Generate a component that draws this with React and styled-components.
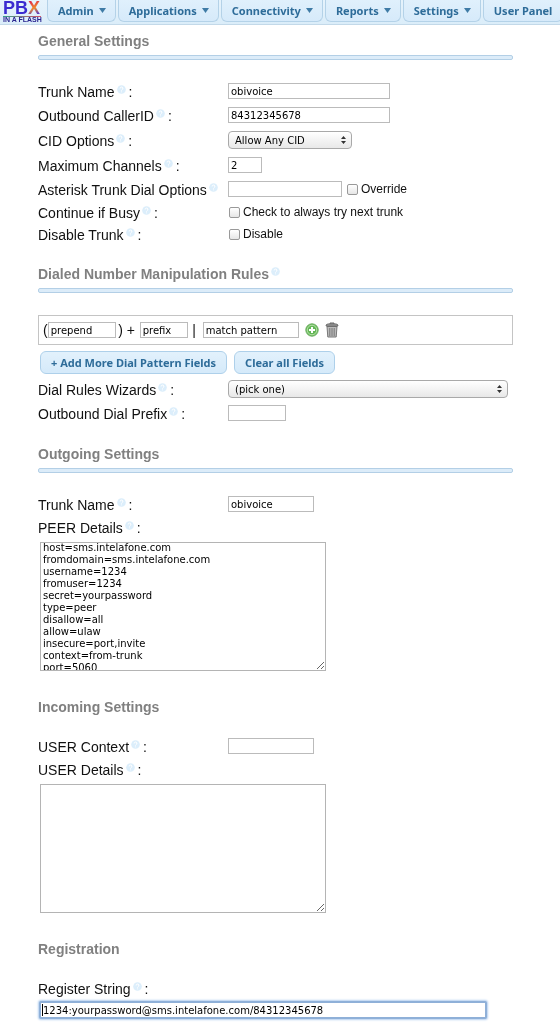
import { useEffect, useRef } from 'react';
import styled, { createGlobalStyle } from 'styled-components';

const menu = [
  { name: 'Admin', more: true },
  { name: 'Applications', more: true },
  { name: 'Connectivity', more: true },
  { name: 'Reports', more: true },
  { name: 'Settings', more: true },
  { name: 'User Panel', more: false },
];

const peerDetails = `host=sms.intelafone.com
fromdomain=sms.intelafone.com
username=1234
fromuser=1234
secret=yourpassword
type=peer
disallow=all
allow=ulaw
insecure=port,invite
context=from-trunk
port=5060

`;

function Help() {
  return (
    <HelpIcon viewBox="0 0 9 9" aria-hidden="true">
      <circle cx="4.5" cy="4.5" r="4.3" fill="#dceefb" />
      <path
        d="M3.1 3.5a1.4 1.4 0 1 1 2 1.2q-.6.3-.6.9M4.5 6.5v.8"
        fill="none"
        stroke="#fff"
      />
    </HelpIcon>
  );
}

function Field({ id, label, size, noColon, children }) {
  return (
    <Row $size={size}>
      <Label htmlFor={id}>
        {label}
        <Help />
        {!noColon && <Colon>:</Colon>}
      </Label>
      {children}
    </Row>
  );
}

function Picker({ id, option, wide }) {
  return (
    <SelectWrapper $wide={wide}>
      <Select id={id}>
        <option>{option}</option>
      </Select>
      <SelectArrows viewBox="0 0 5 8" aria-hidden="true">
        <path d="M2.5 0 5 3H0zM2.5 8 5 5H0z" fill="#333" />
      </SelectArrows>
    </SelectWrapper>
  );
}

export default function App() {
  const peer = useRef(null);

  useEffect(() => {
    peer.current.scrollTop = 1;
  }, []);

  return (
    <>
      <GlobalStyle />
      <MenuBar>
        <Logo href="#">
          <LogoName>
            PB<LogoX>X</LogoX>
          </LogoName>
          <LogoLine>IN A FLASH</LogoLine>
        </Logo>
        {menu.map((item) => (
          <MenuButton key={item.name} type="button" $more={item.more}>
            {item.name}
            {item.more && (
              <MenuArrow viewBox="0 0 7 5" aria-hidden="true">
                <path d="M0 0h7L3.5 5z" fill="#3f7ba6" />
              </MenuArrow>
            )}
          </MenuButton>
        ))}
      </MenuBar>

      <Form>
        <Heading $first>General Settings</Heading>
        <Rule />
        <Fields>
          <Field id="trunk" label="Trunk Name">
            <Input id="trunk" $width={162} defaultValue="obivoice" />
          </Field>
          <Field id="cid" label="Outbound CallerID">
            <Input id="cid" $width={162} defaultValue="84312345678" />
          </Field>
          <Field id="cidopt" label="CID Options" size="select">
            <Picker id="cidopt" option="Allow Any CID" />
          </Field>
          <Field id="channels" label="Maximum Channels">
            <Input id="channels" $width={34} defaultValue="2" />
          </Field>
          <Field id="dialopts" label="Asterisk Trunk Dial Options" noColon>
            <Input id="dialopts" $width={114} />
            <CheckLabel $after>
              <Checkbox type="checkbox" />
              Override
            </CheckLabel>
          </Field>
          <Field id="busy" label="Continue if Busy" size="check">
            <CheckLabel>
              <Checkbox id="busy" type="checkbox" />
              Check to always try next trunk
            </CheckLabel>
          </Field>
          <Field id="disable" label="Disable Trunk" size="check">
            <CheckLabel>
              <Checkbox id="disable" type="checkbox" />
              Disable
            </CheckLabel>
          </Field>
        </Fields>

        <Heading>
          Dialed Number Manipulation Rules
          <Help />
        </Heading>
        <Rule />
        <PatternBox>
          (
          <Input aria-label="prepend" $width={68} defaultValue="prepend" />
          <Sign $width={24}>) +</Sign>
          <Input aria-label="prefix" $width={48} defaultValue="prefix" />
          <Sign $width={15}>|</Sign>
          <Input
            aria-label="match pattern"
            $width={96}
            defaultValue="match pattern"
          />
          <IconButton type="button" aria-label="Add pattern">
            <svg width="14" height="14" viewBox="0 0 14 14">
              <circle cx="7" cy="7" r="6.2" fill="#62b755" stroke="#6fae63" />
              <circle cx="7" cy="7" r="4.8" fill="none" stroke="#b9e3ab" />
              <path d="M7 4v6M4 7h6" stroke="#fff" strokeWidth="2" />
            </svg>
          </IconButton>
          <IconButton type="button" aria-label="Delete pattern">
            <svg width="14" height="16" viewBox="0 0 14 16">
              <path d="M2 4.500h10L11.200 15H2.800z" fill="#bbb" stroke="#777" />
              <path d="M4.800 6v8M7 6v8M9.200 6v8" stroke="#777" />
              <path
                d="M1 4q0-2 2-2h8q2 0 2 2zM5 2V1h4v1"
                fill="#aaa"
                stroke="#666"
              />
            </svg>
          </IconButton>
        </PatternBox>
        <Actions>
          <Button type="button">+ Add More Dial Pattern Fields</Button>
          <Button type="button">Clear all Fields</Button>
        </Actions>
        <Field id="wizard" label="Dial Rules Wizards">
          <Picker id="wizard" option="(pick one)" wide />
        </Field>
        <Field id="prefix" label="Outbound Dial Prefix">
          <Input id="prefix" $width={58} />
        </Field>

        <Heading>Outgoing Settings</Heading>
        <Rule />
        <Fields>
          <Field id="outname" label="Trunk Name">
            <Input id="outname" $width={86} defaultValue="obivoice" />
          </Field>
          <Field id="peer" label="PEER Details" size="check" />
          <TextArea id="peer" ref={peer} defaultValue={peerDetails} />
        </Fields>

        <Heading>Incoming Settings</Heading>
        <Fields $close>
          <Field id="context" label="USER Context">
            <Input id="context" $width={86} />
          </Field>
          <Field id="user" label="USER Details" size="check" />
          <TextArea id="user" />
        </Fields>

        <Heading>Registration</Heading>
        <Fields $close>
          <Field id="register" label="Register String" />
          <FocusBox>
            <RegisterInput
              id="register"
              defaultValue="1234:yourpassword@sms.intelafone.com/84312345678"
            />
            <Caret />
          </FocusBox>
        </Fields>
      </Form>
    </>
  );
}

const GlobalStyle = createGlobalStyle`
  * {
    box-sizing: border-box;
  }
  body {
    margin: 0;
    background: #fff;
    color: #111;
    font-family: 'Liberation Sans', Arial, sans-serif;
    font-size: 14px;
  }
  input, textarea, select {
    font-family: 'DejaVu Sans', sans-serif;
    font-size: 10px;
    color: #000;
  }
`;

const MenuBar = styled.nav`
  display: flex;
  align-items: flex-start;
  gap: 2px;
  height: 25px;
  background: linear-gradient(#e6f3fc, #dbedf9);
  border-bottom: 1px solid #c3d9e9;
`;

const Logo = styled.a`
  flex: none;
  width: 45px;
  padding-left: 3px;
  text-decoration: none;
  font-weight: bold;
  white-space: nowrap;
`;

const LogoName = styled.div`
  font-size: 18px;
  line-height: 16px;
  color: #3a2bd0;
`;

const LogoX = styled.span`
  background: linear-gradient(160deg, #e0304a 20%, #f08a2a 50%, #5a3ac0 80%);
  background-clip: text;
  color: transparent;
`;

const LogoLine = styled.div`
  width: 38px;
  font-size: 7px;
  line-height: 7px;
  color: #2a2590;
  background: linear-gradient(to right, #35a08a, #d0506a) top / 100% 1px
    no-repeat;
`;

const MenuButton = styled.button`
  display: flex;
  flex: none;
  align-items: center;
  gap: 5px;
  height: 22px;
  padding: ${({ $more }) => ($more ? '0 9px 0 10px' : '0 10px')};
  border: 1px solid #b4d2e8;
  border-top: 0;
  border-radius: 0 0 6px 6px;
  background: linear-gradient(#e0f0fc, #d6eafa);
  font: bold 11px 'Noto Sans', sans-serif;
  color: #2e6c99;
`;

const MenuArrow = styled.svg`
  width: 7px;
  height: 5px;
`;

const Form = styled.form`
  padding: 8px 47px 5px 38px;
`;

const Heading = styled.h2`
  margin: ${({ $first }) => ($first ? '0' : '21px')} 0 5px;
  font-size: 14px;
  line-height: 17px;
  color: #808080;
`;

const Rule = styled.div`
  height: 5px;
  border: 1px solid #b3cfe6;
  border-radius: 2px;
  background: #dcecf9;
`;

const Fields = styled.div`
  padding-top: ${({ $close }) => ($close ? '13px' : '19px')};
`;

const rowHeights = { select: '26px', check: '22px' };

const Row = styled.div`
  display: flex;
  align-items: center;
  height: ${({ $size }) => rowHeights[$size] || '24px'};
`;

const Label = styled.label`
  flex: none;
  width: 190px;
  padding-top: 2px;
  line-height: 20px;
  white-space: nowrap;
`;

const Colon = styled.span`
  margin-left: 3px;
`;

const HelpIcon = styled.svg`
  width: 9px;
  height: 9px;
  margin-left: 2px;
  vertical-align: 3px;
`;

const Input = styled.input`
  width: ${({ $width }) => $width}px;
  height: 16px;
  padding: 0 2px;
  border: 1px solid #bbb;
  background: #fff;
`;

const SelectWrapper = styled.div`
  position: relative;
  width: ${({ $wide }) => ($wide ? '280px' : '124px')};
`;

const Select = styled.select`
  display: block;
  appearance: none;
  width: 100%;
  height: 18px;
  padding: 0 6px;
  border: 1px solid #a9a9a9;
  border-radius: 4px;
  background: linear-gradient(#fff, #e8e8e8);
`;

const SelectArrows = styled.svg`
  position: absolute;
  top: 5px;
  right: 6px;
  width: 5px;
  height: 8px;
  pointer-events: none;
`;

const CheckLabel = styled.label`
  display: flex;
  align-items: center;
  gap: 3px;
  margin-left: ${({ $after }) => ($after ? '5px' : '1px')};
  font-size: 12px;
`;

const Checkbox = styled.input`
  appearance: none;
  width: 11px;
  height: 11px;
  margin: 0;
  border: 1px solid #999;
  border-radius: 2px;
  background: linear-gradient(#fff, #e6e6e6);
`;

const PatternBox = styled.div`
  display: flex;
  align-items: center;
  height: 30px;
  margin-top: 22px;
  padding-left: 4px;
  border: 1px solid #c4c4c4;
`;

const Sign = styled.span`
  width: ${({ $width }) => $width}px;
  padding-right: 2px;
  text-align: center;
`;

const IconButton = styled.button`
  display: flex;
  margin-left: 6px;
  padding: 0;
  border: 0;
  background: none;
`;

const Actions = styled.div`
  display: flex;
  gap: 7px;
  padding: 6px 2px 3px;
`;

const Button = styled.button`
  height: 23px;
  padding: 0 10px;
  border: 1px solid #aed0ea;
  border-radius: 6px;
  background: linear-gradient(#e2f1fc, #d5eafa);
  font: bold 11px 'Noto Sans', sans-serif;
  color: #2e6c99;
`;

const TextArea = styled.textarea`
  display: block;
  width: 286px;
  height: 129px;
  margin: 4px 0 28px 2px;
  padding: 0 2px;
  border: 1px solid #b4b4b4;
  line-height: 12px;
  scrollbar-width: none;
`;

const FocusBox = styled.div`
  position: relative;
  width: 448px;
  margin: 1px 0 0 1px;
`;

const RegisterInput = styled.input`
  display: block;
  width: 100%;
  height: 18px;
  padding: 0 2px;
  border: 2px solid #8fb0d8;
  border-radius: 2px;
  outline: none;
  box-shadow: 0 0 2px 1px #b5d0f0;
`;

const Caret = styled.span`
  position: absolute;
  top: 3px;
  left: 3px;
  width: 1px;
  height: 12px;
  background: #000;
`;
